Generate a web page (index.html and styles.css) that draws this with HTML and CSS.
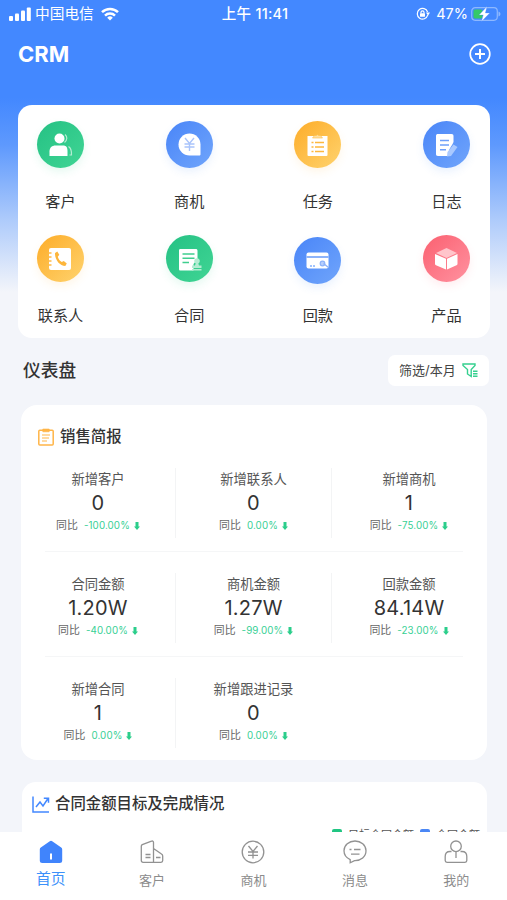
FILE: index.html
```html
<!DOCTYPE html>
<html lang="zh-CN">
<head>
<meta charset="utf-8">
<title>CRM</title>
<link rel="stylesheet" href="styles.css">
</head>
<body>
<svg class="defs" width="0" height="0" aria-hidden="true">
  <symbol id="down" viewBox="0 0 6 8"><path d="M1.500 0h3v4.500H6L3 8 0 4.500h1.500z" fill="currentColor"/></symbol>
</svg>
<div class="phone">
  <header class="status">
    <div class="status-left">
      <svg width="22" height="14" viewBox="0 0 22 14" fill="#fff"><rect y="9" width="4" height="5" rx="1"/><rect x="6" y="6.500" width="4" height="7.500" rx="1"/><rect x="12" y="3.500" width="4" height="10.500" rx="1"/><rect x="17.800" y="0.500" width="4" height="13.500" rx="1"/></svg>
      <span class="carrier">中国电信</span>
      <svg width="18" height="14" viewBox="0 0 18 14" fill="none" stroke="#fff" stroke-width="2.500"><path d="M1 5.200a11.500 11.500 0 0 1 16 0M4 8.600a7.200 7.200 0 0 1 10 0"/><path d="M9 13.500 6.200 10.700a4 4 0 0 1 5.600 0z" fill="#fff" stroke="none"/></svg>
    </div>
    <div class="clock">上午 11:41</div>
    <div class="status-right">
      <svg width="14" height="14" viewBox="0 0 14 14" fill="none" stroke="#fff" stroke-width="1.200"><path d="M11.700 8.200A5.300 5.300 0 1 1 11.600 5"/><path d="M10 5.500h4l-2 3.200z" fill="#fff" stroke="none"/><rect x="4" y="6.200" width="5" height="3.600" rx=".6" fill="#fff" stroke="none"/><path d="M5 6.500V5.300a1.500 1.500 0 0 1 3 0v1.200"/></svg>
      <span class="charge">47%</span>
      <svg width="30" height="16" viewBox="0 0 30 16"><rect x=".7" y="1.700" width="25.600" height="12.600" rx="3.500" fill="none" stroke="#8eb8ff" stroke-width="1.200"/><path d="M27.500 5.500v5c2.600-.8 2.600-4.200 0-5z" fill="#8eb8ff"/><rect x="2.500" y="3.500" width="9" height="9" rx="1.500" fill="#35c86a"/><path d="M16 .5 8 9h4.200L10.500 15.500 18.800 7h-4.400z" fill="#fff" stroke="#4388ff" stroke-width=".3"/></svg>
    </div>
  </header>

  <div class="titlebar">
    <h1>CRM</h1>
    <svg width="22" height="22" viewBox="0 0 22 22" fill="none" stroke="#fff"><circle cx="11" cy="11" r="9.800" stroke-width="1.700"/><path d="M11 6v10M6 11h10" stroke-width="2"/></svg>
  </div>

  <main>
    <nav class="card apps">
      <a class="app"><span class="disc green"><svg viewBox="0 0 47 47" fill="#fff"><circle cx="22.500" cy="17.500" r="5"/><path d="M12.500 35v-4.500c0-4 2.500-6 6-6h7.500c3.500 0 4.500 2 4.500 6V35z"/><path d="M28 13.500c2.500 2 2.500 5.500-.5 8M31.500 25.500c2.500 1.500 3.200 4 3 8.500h-2" fill="none" stroke="#b4ecd2" stroke-width="1.200"/></svg></span><span>客户</span></a>
      <a class="app"><span class="disc blue"><svg viewBox="0 0 47 47"><path d="M34.500 23.500v9.700c0 .8-.5 1.300-1.300 1.300h-9.700a11 11 0 1 1 11-11z" fill="#fff"/><path d="m19 17 4.500 5.500L28 17M18.500 23h10M18.500 26h10M23.500 22.500V30" stroke="#a9c4fb" stroke-width="1.400" fill="none"/></svg></span><span>商机</span></a>
      <a class="app"><span class="disc orange"><svg viewBox="0 0 47 47"><path d="M13.500 15h20v19a1 1 0 0 1-1 1h-18a1 1 0 0 1-1-1z" fill="#fff"/><path d="m18.500 17 2-2.500h1.800a1.500 1.500 0 0 1 2.400 0h1.800l2 2.500z" fill="#ffe0a0" stroke="#ffbd45" stroke-width=".6"/><path d="M17.500 21.500h2M21 21.500h9M17.500 26h2M21 26h9M17.500 30.500h2M21 30.500h9" stroke="#fdb83d" stroke-width="1.400"/></svg></span><span>任务</span></a>
      <a class="app"><span class="disc blue"><svg viewBox="0 0 47 47"><path d="M15 13h13.500c1.500 0 2 .8 2 2v6c-2 5-5 6-5.500 14H15c-1.500 0-2-.8-2-2V15c0-1.500.8-2 2-2z" fill="#fff"/><path d="M17 19.500h9M17 24h9M17 28.800h6" stroke="#6fa0fa" stroke-width="1.400"/><path d="m30.500 23.500 4 2.500-6.500 9-4 .5.500-4.500z" fill="#a9c9ff"/></svg></span><span>日志</span></a>
      <a class="app"><span class="disc orange"><svg viewBox="0 0 47 47"><rect x="12" y="13" width="22" height="22" rx="2" fill="#fff"/><path d="M11.500 18h3M11.500 22h3M11.500 26h3M11.500 30h3" stroke="#ffb947" stroke-width="1.300"/><path d="m18 18 2.300-1.500 2 3.200-1.500 2c.8 2.600 2 4 4 5.400l2-1 3 2.500-1.500 2.400c-5.500-.2-10.500-6-10.300-13z" fill="#fdb63c"/></svg></span><span>联系人</span></a>
      <a class="app"><span class="disc green"><svg viewBox="0 0 47 47"><path d="M14.500 14h15c1.500 0 2 .5 2 2v8l-4 5v6.500h-13c-1 0-1.500-.5-1.500-1.500V15.500c0-1 .5-1.500 1.500-1.500z" fill="#fff"/><path d="M16.500 19h12M16.500 23.200h12M16.500 27.500h6.500" stroke="#3fce8e" stroke-width="1.400"/><path d="M26 33v-2.500h3l.7-2a2.800 2.800 0 1 1 2.600 0l.7 2h2.500V33zM26 34h9.500v1.500H26z" fill="#b4ecd2"/></svg></span><span>合同</span></a>
      <a class="app low"><span class="disc blue"><svg viewBox="0 0 47 47"><rect x="12.500" y="15.500" width="22" height="16" rx="2" fill="#fff"/><path d="M12.500 20h22" stroke="#79a7fa" stroke-width="1.700"/><path d="M16 29h2M19 29h2" stroke="#4388ff"/><circle cx="28.500" cy="26.500" r="2.300" fill="#b7cffc" stroke="#8cb2fa" stroke-width="1.200"/><path d="m29.500 26.500 5 4" stroke="#8cb2fa" stroke-width="1.400"/></svg></span><span>回款</span></a>
      <a class="app"><span class="disc red"><svg viewBox="0 0 47 47"><path d="m23.500 13 10.500 5-10.500 5L13 18z" fill="#ffc5cb"/><path d="m12 19 11 4.800V34.500l-10-4.300c-.7-.3-1-.8-1-1.500zM34.500 19l-10.500 4.800V34.500l9.500-4.300c.7-.3 1-.8 1-1.500z" fill="#fff"/></svg></span><span>产品</span></a>
    </nav>

    <section class="dash-head">
      <h2>仪表盘</h2>
      <button class="filter">筛选/本月
        <svg width="16" height="15" viewBox="0 0 16 15" fill="none" stroke="#35d08f" stroke-width="1.400"><path d="M9.200 13.500 5.500 11V6.500L1 2.500V1h12v1.500L9.200 6.500z"/><path d="M11 8.300h4.500M11 10.800h4.500M11 13.300h4.500" stroke-width="1.500"/></svg>
      </button>
    </section>

    <section class="card brief">
      <h3><svg width="16" height="18" viewBox="0 0 16 18" fill="none" stroke="#ffb548" stroke-width="1.500"><rect x=".8" y="2.300" width="14.400" height="14.700" rx="1"/><path d="M4.800 1h6.400v2.800H4.800z" fill="#ffb548" stroke-width=".6"/><path d="M4 7h8M4 10h7M4 13h5" stroke-width="1.200"/></svg>销售简报</h3>
      <div class="stats">
        <div class="stat"><span class="label">新增客户</span><b>0</b><span class="yoy">同比 <i>-100.00%</i><svg><use href="#down"/></svg></span></div>
        <div class="stat"><span class="label">新增联系人</span><b>0</b><span class="yoy">同比 <i>0.00%</i><svg><use href="#down"/></svg></span></div>
        <div class="stat"><span class="label">新增商机</span><b>1</b><span class="yoy">同比 <i>-75.00%</i><svg><use href="#down"/></svg></span></div>
      </div>
      <div class="stats">
        <div class="stat"><span class="label">合同金额</span><b>1.20W</b><span class="yoy">同比 <i>-40.00%</i><svg><use href="#down"/></svg></span></div>
        <div class="stat"><span class="label">商机金额</span><b>1.27W</b><span class="yoy">同比 <i>-99.00%</i><svg><use href="#down"/></svg></span></div>
        <div class="stat"><span class="label">回款金额</span><b>84.14W</b><span class="yoy">同比 <i>-23.00%</i><svg><use href="#down"/></svg></span></div>
      </div>
      <div class="stats">
        <div class="stat"><span class="label">新增合同</span><b>1</b><span class="yoy">同比 <i>0.00%</i><svg><use href="#down"/></svg></span></div>
        <div class="stat last"><span class="label">新增跟进记录</span><b>0</b><span class="yoy">同比 <i>0.00%</i><svg><use href="#down"/></svg></span></div>
      </div>
    </section>

    <section class="card target">
      <h3><svg width="18" height="17" viewBox="0 0 18 17" fill="none" stroke="#4388ff" stroke-width="1.500"><path d="M1 .5V16h16"/><path d="m4 11 4-5 3 4 5-7.500M11.800 2.200h4.700v4.500"/></svg>合同金额目标及完成情况</h3>
      <div class="legend"><span class="key goal"></span>目标合同金额<span class="key real"></span>合同金额</div>
    </section>
  </main>

  <nav class="tabs">
    <a class="tab active"><svg viewBox="0 0 24 24"><path d="M12 .8c.5 0 .8.200 1.200.500l9 6.300c.7.500 1 1.100 1 2V20.500c0 1.700-.9 2.500-2.500 2.500H3.300C1.700 23 .8 22.200.8 20.500V9.600c0-.9.300-1.500 1-2l9-6.300c.4-.3.700-.5 1.200-.500z" fill="#4084fc"/><path d="M12 13.500v6" stroke="#fff" stroke-width="2"/></svg><span>首页</span></a>
    <a class="tab"><svg viewBox="0 0 24 24"><path d="M13.500 22.300H3c-1 0-1.700-.7-1.700-1.700V6.300c0-.8.300-1.300 1-1.600l9.200-3.500c1.200-.5 2 .1 2 1.300zM13.500 8.500l8 5.500c.8.500 1.200 1.100 1.200 2v4.600c0 1.100-.6 1.700-1.700 1.700h-7.500M5.500 14.500h5M5.500 17.500h5M16 17.500h4.500"/></svg><span>客户</span></a>
    <a class="tab"><svg viewBox="0 0 24 24"><circle cx="12" cy="12" r="10.800"/><path d="m7.500 6 4.500 5.500L16.500 6M7 12h10M7 15.300h10M12 11.500v7"/></svg><span>商机</span></a>
    <a class="tab"><svg viewBox="0 0 24 24"><path d="M12 1C6 1 1 5.300 1 10.800c0 4 2.500 7.200 6.200 8.800v3.200l4.300-2.200C18 20.800 23 16.700 23 10.800 23 5.300 18 1 12 1zM6.500 9.500h2M11 9.500h6.500M8 14.200h8.500"/></svg><span>消息</span></a>
    <a class="tab"><svg viewBox="0 0 24 24"><circle cx="12" cy="6.300" r="5.300"/><path d="M7.500 11.500H6c-3.200 0-4.800 2-4.800 5v4c0 1.200.6 1.800 1.800 1.800h18c1.200 0 1.800-.6 1.800-1.800v-4c0-3-1.600-5-4.800-5h-1.500M12 12v6"/></svg><span>我的</span></a>
  </nav>
</div>
</body>
</html>
```

FILE: styles.css
```css
* { box-sizing: border-box; }
body {
  margin: 0;
  font-family: Inter, "Noto Sans CJK SC", sans-serif;
  color: #333;
  background: #f3f5fa;
}
h1, h2, h3 { margin: 0; }
svg { display: block; flex: none; }
.defs { position: absolute; }

.phone {
  height: 900px;
  display: flex;
  flex-direction: column;
  overflow: hidden;
  background: linear-gradient(#4388ff 0, #4388ff 98px, #5e99fd 145px, #aecbfb 220px, #f3f5fa 292px);
}

.status {
  flex: none;
  height: 28px;
  display: grid;
  grid-template-columns: 1fr auto 1fr;
  align-items: center;
  padding: 0 6px 0 9px;
  color: #fff;
  line-height: 20px;
}
.status-left, .status-right { display: flex; align-items: center; }
.status-right { justify-content: flex-end; }
.carrier { font-size: 14.700px; margin: 0 7px 0 4px; }
.clock { font-size: 14.500px; font-weight: 500; letter-spacing: .25px; }
.charge { font-size: 14.500px; margin: 0 3px 0 6px; }

.titlebar {
  flex: none;
  height: 77px;
  display: flex;
  justify-content: space-between;
  align-items: flex-start;
  padding: 15px 16px 0 18px;
  color: #fff;
}
.titlebar h1 { font-size: 22px; line-height: 23px; font-weight: 700; }

main { flex: 1; min-height: 0; overflow: hidden; }
.card { background: #fff; border-radius: 14px; }

.apps {
  margin: 0 17px 0 18px;
  height: 233px;
  padding: 16px 20px 0 19px;
  display: grid;
  grid-template-columns: repeat(4, 47px);
  grid-auto-rows: 114px;
  justify-content: space-between;
}
.app {
  display: flex;
  flex-direction: column;
  align-items: center;
  gap: 23px;
  font-size: 15.200px;
  line-height: 22px;
  white-space: nowrap;
}
.app.low { padding-top: 2px; gap: 21px; }
.disc { width: 47px; height: 47px; border-radius: 50%; }
.green { background: linear-gradient(135deg, #25c184, #40d594); box-shadow: 0 4px 9px #32cd8b1f; }
.blue { background: linear-gradient(135deg, #4985f8, #70a5fb); box-shadow: 0 4px 9px #5591fa1f; }
.orange { background: linear-gradient(135deg, #fdac28, #ffd36e); box-shadow: 0 4px 9px #ffb63e1f; }
.red { background: linear-gradient(135deg, #fb6070, #ff92a0); box-shadow: 0 4px 9px #fd74831f; }

.dash-head {
  display: flex;
  justify-content: space-between;
  align-items: center;
  height: 67px;
  padding: 0 18px 3px 23px;
}
.dash-head h2 { font-size: 17.700px; font-weight: 500; line-height: 26px; padding-top: 1px; }
.filter {
  display: flex;
  align-items: center;
  justify-content: space-between;
  width: 101px;
  height: 31px;
  padding: 0 11px 0 11px;
  border: 0;
  border-radius: 7px;
  background: #fff;
  font: 13px/20px Inter, "Noto Sans CJK SC", sans-serif;
  color: #444;
}

.brief {
  margin: 0 20px 0 21px;
  height: 355px;
  padding-top: 20px;
  border-radius: 16px;
}
h3 {
  display: flex;
  align-items: center;
  gap: 6px;
  font-size: 15.400px;
  font-weight: 500;
  line-height: 24px;
}
.brief h3 { padding-left: 17px; height: 23px; }
.stats {
  display: grid;
  grid-template-columns: repeat(3, 155.500px);
  height: 105px;
  margin: 0 24px;
  padding-top: 21px;
  border-top: 1px solid #f5f6f7;
  justify-content: center;
}
h3 + .stats { border-color: transparent; height: 103px; padding-top: 19px; }
.stat {
  height: 70px;
  display: flex;
  flex-direction: column;
  align-items: center;
  border-right: 1px solid #f3f4f5;
}
.stat:nth-child(3), .stat.last { border-color: transparent; }
.label { font-size: 13.300px; line-height: 23px; color: #555; }
.stat b { font-size: 20px; font-weight: 400; line-height: 25px; letter-spacing: .2px; }
.yoy { display: flex; align-items: center; font-size: 10.900px; line-height: 19px; color: #666; }
.yoy i { font-style: normal; font-size: 9.800px; letter-spacing: .1px; color: #38d095; margin: 0 4px 0 6px; }
.yoy svg { width: 6px; height: 8px; color: #2bce8b; }

.target { margin: 22px 20px 0 22px; height: 240px; padding-top: 10px; }
.target h3 { padding-left: 10px; gap: 5px; }
.legend {
  display: flex;
  justify-content: flex-end;
  align-items: center;
  padding: 11px 7px 0 0;
  font-size: 11px;
  line-height: 16px;
  color: #555;
}
.key { width: 10px; height: 12px; border-radius: 2px; margin: 0 6px; }
.goal { background: #20c582; }
.real { background: #4b87f5; }

.tabs {
  flex: none;
  height: 68px;
  display: grid;
  grid-template-columns: repeat(5, 1fr);
  background: #fff;
}
.tab {
  display: flex;
  flex-direction: column;
  align-items: center;
  padding-top: 8px;
  gap: 5px;
  font-size: 13px;
  line-height: 22px;
  color: #8c8c8c;
}
.tab svg { width: 24px; height: 24px; fill: none; stroke: #929292; stroke-width: 1.300; }
.tab.active { color: #3c91fa; font-size: 14.800px; line-height: 20px; }
.tab.active svg { stroke: none; }
```
